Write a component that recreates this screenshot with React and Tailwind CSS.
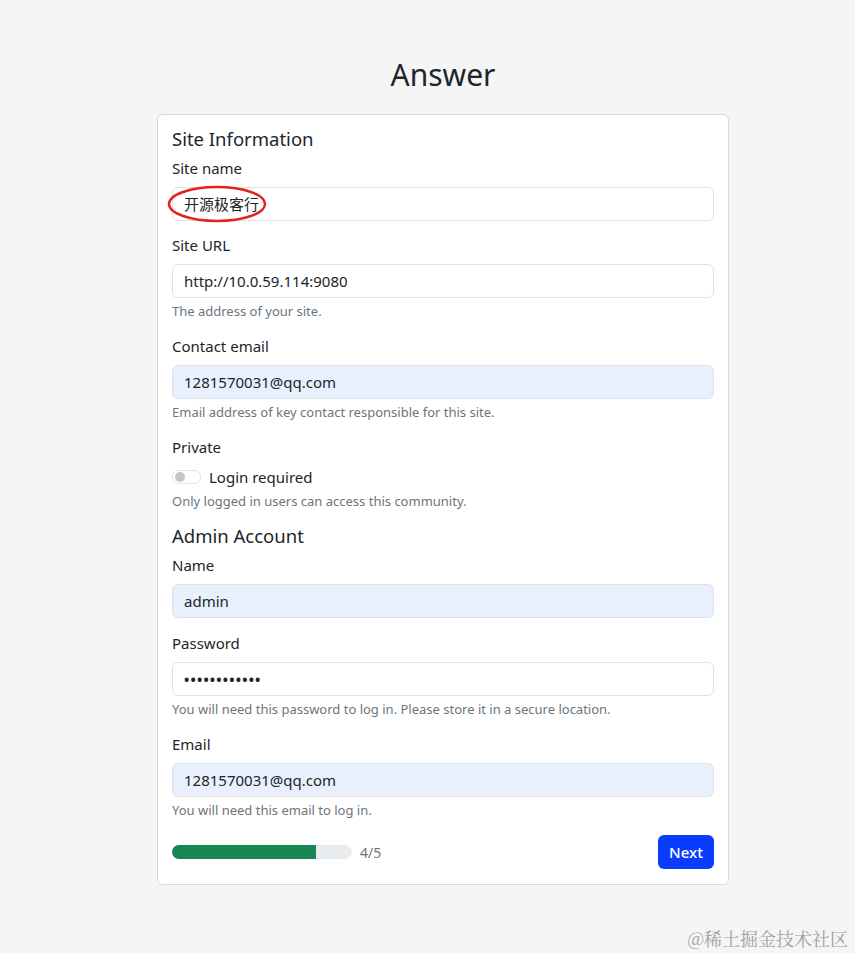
import React from "react";

const font = { fontFamily: '"Noto Sans", "Noto Sans CJK SC", sans-serif' };

function Label({ children, className = "" }) {
  return <div className={`text-[15px] leading-[22px] text-[#212529] mb-[8px] ${className}`}>{children}</div>;
}

function Input({ value, autofill, children }) {
  return (
    <div
      className={`relative h-[34px] rounded-[6px] border border-[#dee2e6] flex items-center px-[11px] text-[15px] text-[#212529] ${
        autofill ? "bg-[#e8f0fe]" : "bg-white"
      }`}
    >
      {value}
      {children}
    </div>
  );
}

function Help({ children }) {
  return <div className="mt-[3px] text-[13px] leading-[20px] text-[#6c757d]">{children}</div>;
}

export default function App() {
  return (
    <div className="relative min-h-screen bg-[#f5f5f5] flex flex-col items-center pl-[31px] pt-[57px] pb-[69px]" style={font}>
      <h1 className="text-[30px] leading-[36px] text-[#212529] mb-[21px]">Answer</h1>
      <div className="w-[572px] bg-white border border-[#d9d9d9] rounded-[6px] px-[14px] pt-[12px] pb-[15px]">
        <div className="text-[18.5px] leading-[24px] text-[#212529] mb-[6px]">Site Information</div>

        <div className="mb-[13px]">
          <Label>Site name</Label>
          <Input value="开源极客行">
            <svg className="absolute left-[-6px] top-[-3px]" width="100" height="38" viewBox="0 0 100 38">
              <ellipse cx="50" cy="19" rx="48" ry="17" fill="none" stroke="#e3241b" strokeWidth="2.5" />
            </svg>
          </Input>
        </div>

        <div className="mb-[14px]">
          <Label>Site URL</Label>
          <Input value="http://10.0.59.114:9080" />
          <Help>The address of your site.</Help>
        </div>

        <div className="mb-[14px]">
          <Label>Contact email</Label>
          <Input value="1281570031@qq.com" autofill />
          <Help>Email address of key contact responsible for this site.</Help>
        </div>

        <div className="mb-[13px]">
          <Label className="mb-[7px]">Private</Label>
          <div className="flex items-center gap-[8px] h-[22px]">
            <div className="w-[29px] h-[14px] rounded-full border border-[#dee2e6] flex items-center px-[2px]">
              <div className="w-[10px] h-[10px] rounded-full bg-[#c4c4c4]" />
            </div>
            <span className="text-[15px] text-[#212529]">Login required</span>
          </div>
          <Help>Only logged in users can access this community.</Help>
        </div>

        <div className="text-[18.5px] leading-[24px] text-[#212529] mb-[6px]">Admin Account</div>

        <div className="mb-[14px]">
          <Label>Name</Label>
          <Input value="admin" autofill />
        </div>

        <div className="mb-[14px]">
          <Label>Password</Label>
          <Input value={<span className="tracking-[1.2px] text-[14px] font-bold">••••••••••••</span>} />
          <Help>You will need this password to log in. Please store it in a secure location.</Help>
        </div>

        <div className="mb-[15px]">
          <Label>Email</Label>
          <Input value="1281570031@qq.com" autofill />
          <Help>You will need this email to log in.</Help>
        </div>

        <div className="flex items-center justify-between">
          <div className="flex items-center gap-[8px]">
            <div className="w-[180px] h-[14px] rounded-full bg-[#e9ecef] overflow-hidden">
              <div className="h-full bg-[#198754]" style={{ width: "80%" }} />
            </div>
            <span className="text-[14px] text-[#6c757d]">4/5</span>
          </div>
          <button className="w-[56px] h-[34px] rounded-[6px] bg-[#0a3cff] text-white text-[15px] font-medium">
            Next
          </button>
        </div>
      </div>

      <div
        className="absolute right-[7px] bottom-[2px] text-[18px] text-[#a0a0a0]"
        style={{ fontFamily: '"Noto Serif CJK SC", "Noto Sans CJK SC", serif' }}
      >
        @稀土掘金技术社区
      </div>
    </div>
  );
}
